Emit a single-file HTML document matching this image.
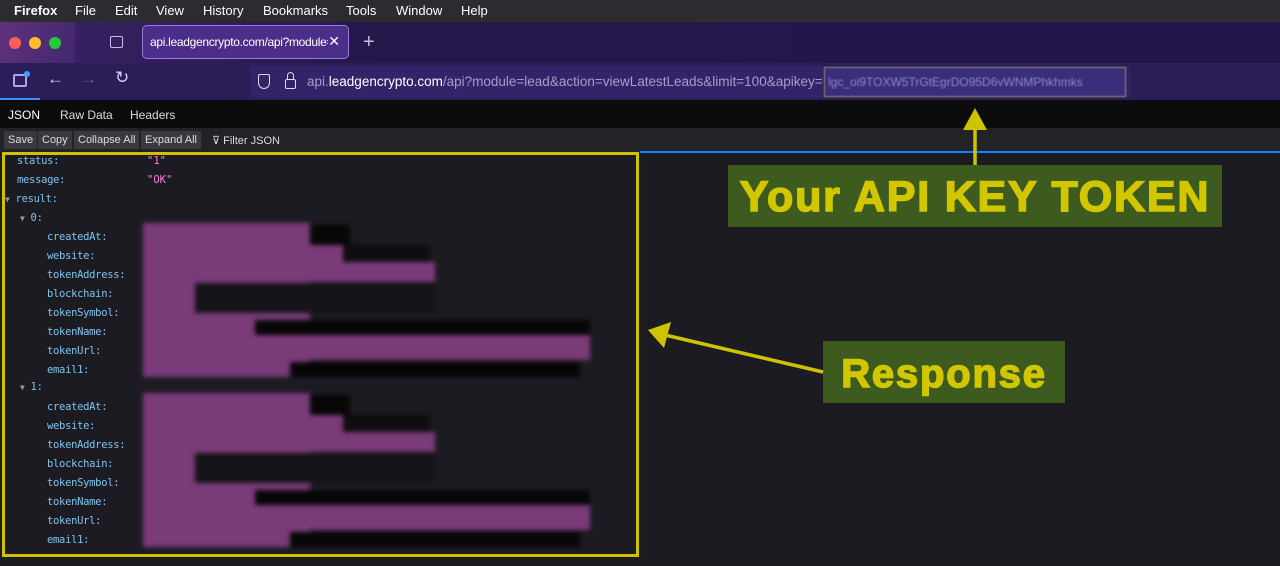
<!DOCTYPE html>
<html><head><meta charset="utf-8"><style>
*{margin:0;padding:0;box-sizing:border-box}
body{width:1280px;height:566px;overflow:hidden;background:#1c1b22;font-family:"Liberation Sans",sans-serif;position:relative}
.abs{position:absolute}
.menu{top:0;left:0;width:1280px;height:22px;background:#2c2b30;color:#fff;font-size:13px}
.menu span{position:absolute;top:3px}
.tabs{top:22px;left:0;width:1280px;height:41px;background:linear-gradient(90deg,#3a2466,#25174a 30%,#22164a)}
.nav{top:63px;left:0;width:1280px;height:37px;background:#2b1d58}
.url{top:66px;left:250px;width:880px;height:32px;background:#33246a;border-radius:4px}
.jt{top:100px;left:0;width:1280px;height:28px;background:#0c0c0d;color:#ddd;font-size:12px}
.tb{top:128px;left:0;width:1280px;height:24px;background:#232227;font-size:11px;color:#ddd}
.btn{position:absolute;top:3px;height:18px;background:#3a393f;padding:2px 4px;line-height:14px}
.k{position:absolute;font-family:"DejaVu Sans Mono","Liberation Mono",monospace;font-size:10.5px;color:#7fc4ef;letter-spacing:-0.3px}
.s{position:absolute;font-family:"DejaVu Sans Mono",monospace;font-size:10.5px;color:#ff7de9}
.m{position:absolute;background:#7a3b79}
.b{position:absolute;background:#070607}
.lbl{position:absolute;background:#3d5a1f;color:#d2c600;font-weight:bold;text-align:center;-webkit-text-stroke:1.5px #d2c600;white-space:nowrap}
</style></head><body>
<div class="abs menu"><span style="left:14px;font-weight:bold">Firefox</span><span style="left:75px">File</span><span style="left:115px">Edit</span><span style="left:156px">View</span><span style="left:203px">History</span><span style="left:263px">Bookmarks</span><span style="left:346px">Tools</span><span style="left:396px">Window</span><span style="left:461px">Help</span></div>
<div class="abs tabs">
 <div class="abs" style="left:0;top:0;width:75px;height:41px;background:linear-gradient(110deg,#7a3a8a,#4a2c7a);opacity:.6"></div>
 <div class="abs" style="left:9px;top:15px;width:12px;height:12px;border-radius:50%;background:#fe5f57"></div>
 <div class="abs" style="left:29px;top:15px;width:12px;height:12px;border-radius:50%;background:#febc2e"></div>
 <div class="abs" style="left:49px;top:15px;width:12px;height:12px;border-radius:50%;background:#28c840"></div>
 <div class="abs" style="left:110px;top:14px;width:13px;height:12px;border:1.5px solid #c8bfe8;border-radius:2px"></div>
 <div class="abs" style="left:142px;top:3px;width:207px;height:34px;background:#4a2e8a;border:1px solid #9a7be0;border-radius:5px;color:#fff;font-size:12px;padding:9px 0 0 7px;white-space:nowrap;overflow:hidden"><span style="display:inline-block;width:178px;overflow:hidden;letter-spacing:-0.3px">api.leadgencrypto.com/api?module=</span><span style="position:absolute;right:8px;top:7px;font-size:14px">✕</span></div>
 <div class="abs" style="left:363px;top:9px;color:#c8bfe8;font-size:20px">+</div>
</div>
<div class="abs nav">
 <div class="abs" style="left:13px;top:11px;width:14px;height:13px;border:2px solid #b69cf5;border-radius:2px"></div>
 <div class="abs" style="left:24px;top:8px;width:6px;height:6px;border-radius:50%;background:#3aa0ff"></div>
 <div class="abs" style="left:47px;top:6px;color:#d8d0f0;font-size:17px">←</div>
 <div class="abs" style="left:80px;top:6px;color:#6a5a99;font-size:17px">→</div>
 <div class="abs" style="left:115px;top:5px;color:#d8d0f0;font-size:17px">↻</div>
</div>
<div class="abs url">
 <div class="abs" style="left:8px;top:8px;width:12px;height:15px;border:1.5px solid #ddd;border-radius:2px 2px 6px 6px"></div>
 <div class="abs" style="left:35px;top:13px;width:11px;height:10px;border:1.5px solid #ddd;border-radius:2px"></div>
 <div class="abs" style="left:37px;top:6px;width:7px;height:8px;border:1.5px solid #ddd;border-bottom:none;border-radius:4px 4px 0 0"></div>
 <div class="abs" style="left:57px;top:8px;font-size:13.5px;color:#a99ccc;white-space:nowrap">api.<span style="color:#fff">leadgencrypto.com</span>/api?module=lead&amp;action=viewLatestLeads&amp;limit=100&amp;apikey=</div>
 <div class="abs" style="left:574px;top:1px;width:302px;height:30px;border:1px solid #9a8a5a;background:#3a2e7a;color:#8a86c8;font-size:12px;padding:7px 3px;filter:blur(.6px);white-space:nowrap">lgc_oi9TOXW5TrGtEgrDO95D6vWNMPhkhmks</div>
</div>
<div class="abs" style="top:98px;left:0;width:40px;height:2px;background:#3a8fff"></div>
<div class="abs jt"><span class="abs" style="left:8px;top:8px;color:#fff">JSON</span><span class="abs" style="left:60px;top:8px">Raw Data</span><span class="abs" style="left:130px;top:8px">Headers</span></div>
<div class="abs tb">
 <div class="btn" style="left:4px">Save</div><div class="btn" style="left:38px">Copy</div><div class="btn" style="left:74px">Collapse All</div><div class="btn" style="left:141px">Expand All</div>
 <div class="abs" style="left:212px;top:6px">⊽ Filter JSON</div>
</div>
<div class="abs" style="top:151px;left:640px;width:640px;height:2px;background:#0a84ff"></div>

<div class="k" style="left:17px;top:155px">status:</div><div class="s" style="left:147px;top:155px">"1"</div>
<div class="k" style="left:17px;top:174px">message:</div><div class="s" style="left:147px;top:174px">"OK"</div>
<div class="k" style="left:5px;top:193px"><span style="color:#999;font-size:8px">▼</span> result:</div>
<div class="k" style="left:20px;top:212px"><span style="color:#999;font-size:8px">▼</span> 0:</div>
<div class="k" style="left:20px;top:381px"><span style="color:#999;font-size:8px">▼</span> 1:</div>

<div class="k" style="left:47px;top:231px">createdAt:</div><div class="k" style="left:47px;top:250px">website:</div><div class="k" style="left:47px;top:269px">tokenAddress:</div><div class="k" style="left:47px;top:288px">blockchain:</div><div class="k" style="left:47px;top:307px">tokenSymbol:</div><div class="k" style="left:47px;top:326px">tokenName:</div><div class="k" style="left:47px;top:345px">tokenUrl:</div><div class="k" style="left:47px;top:364px">email1:</div>
<div class="k" style="left:47px;top:401px">createdAt:</div><div class="k" style="left:47px;top:420px">website:</div><div class="k" style="left:47px;top:439px">tokenAddress:</div><div class="k" style="left:47px;top:458px">blockchain:</div><div class="k" style="left:47px;top:477px">tokenSymbol:</div><div class="k" style="left:47px;top:496px">tokenName:</div><div class="k" style="left:47px;top:515px">tokenUrl:</div><div class="k" style="left:47px;top:534px">email1:</div>

<div style="filter:blur(2.5px)">
<div class="b" style="left:310px;top:225px;width:40px;height:20px"></div>
<div class="b" style="left:340px;top:245px;width:90px;height:18px;background:#0e0d10"></div>
<div class="m" style="left:143px;top:223px;width:167px;height:154px"></div>
<div class="m" style="left:143px;top:245px;width:200px;height:20px"></div>
<div class="m" style="left:143px;top:262px;width:292px;height:20px"></div>
<div class="b" style="left:195px;top:283px;width:240px;height:30px;background:#151418"></div>
<div class="m" style="left:143px;top:280px;width:52px;height:97px"></div>
<div class="b" style="left:255px;top:320px;width:335px;height:15px"></div>
<div class="m" style="left:143px;top:335px;width:447px;height:25px"></div>
<div class="b" style="left:290px;top:362px;width:290px;height:15px"></div>
</div>
<div style="filter:blur(2.5px);position:absolute;left:0;top:170px;width:1px;height:1px">
<div class="b" style="left:310px;top:225px;width:40px;height:20px"></div>
<div class="b" style="left:340px;top:245px;width:90px;height:18px;background:#0e0d10"></div>
<div class="m" style="left:143px;top:223px;width:167px;height:154px"></div>
<div class="m" style="left:143px;top:245px;width:200px;height:20px"></div>
<div class="m" style="left:143px;top:262px;width:292px;height:20px"></div>
<div class="b" style="left:195px;top:283px;width:240px;height:30px;background:#151418"></div>
<div class="m" style="left:143px;top:280px;width:52px;height:97px"></div>
<div class="b" style="left:255px;top:320px;width:335px;height:15px"></div>
<div class="m" style="left:143px;top:335px;width:447px;height:25px"></div>
<div class="b" style="left:290px;top:362px;width:290px;height:15px"></div>
</div>

<div class="abs" style="left:2px;top:152px;width:637px;height:405px;border:3px solid #cfc300"></div>
<div class="lbl" style="left:728px;top:165px;width:494px;height:62px;font-size:43px;line-height:64px;letter-spacing:1.8px">Your API KEY TOKEN</div>
<div class="lbl" style="left:823px;top:341px;width:242px;height:62px;font-size:40px;line-height:66px;letter-spacing:1.8px">Response</div>
<svg class="abs" style="left:0;top:0" width="1280" height="566">
<line x1="975" y1="165" x2="975" y2="125" stroke="#cfc300" stroke-width="3.5"/>
<polygon points="975,108 963,130 987,130" fill="#cfc300"/>
<line x1="823" y1="372" x2="665" y2="335" stroke="#cfc300" stroke-width="3.5"/>
<polygon points="648,330 671,322 664,348" fill="#cfc300"/>
</svg>
</body></html>
